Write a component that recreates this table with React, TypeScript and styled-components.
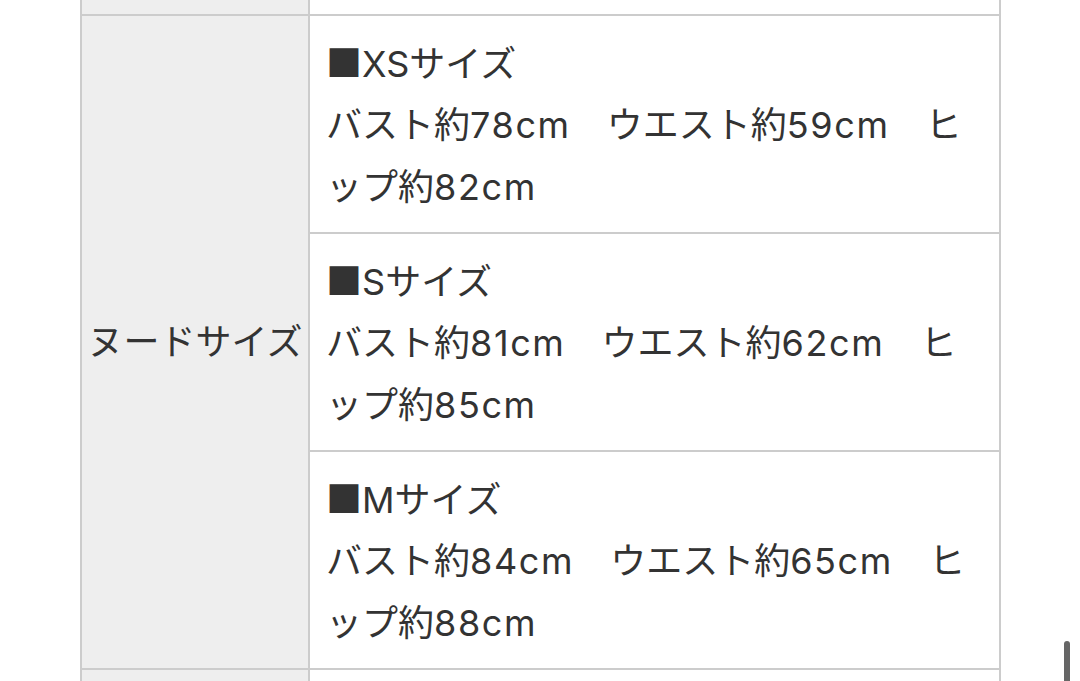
import styled, {createGlobalStyle} from 'styled-components'

type SizeSpec = {
  label: string
  bust: number
  waist: number
  hip: number
}

const sizes: SizeSpec[] = [
  {label: 'XS', bust: 78, waist: 59, hip: 82},
  {label: 'S', bust: 81, waist: 62, hip: 85},
  {label: 'M', bust: 84, waist: 65, hip: 88},
]

const GlobalStyle = createGlobalStyle`
  html, body {
    margin: 0;
    padding: 0;
    background: #fff;
    overflow: hidden;
  }
  body {
    font-family: Inter, 'Noto Sans CJK JP', sans-serif;
    color: #333;
  }
`

const Page = styled.div`
  height: 681px;
  overflow: hidden;
  padding-left: 80px;
`

const SpecGrid = styled.div`
  display: grid;
  grid-template-columns: 226px 689px;
  grid-template-rows: 14px repeat(3, 216px) 60px;
  gap: 2px;
  padding: 0 2px;
  width: fit-content;
  background: #ccc;
`

const HeadCell = styled.div<{$rows?: number}>`
  grid-column: 1;
  grid-row: ${(p) => (p.$rows ? `span ${p.$rows}` : 'auto')};
  display: flex;
  align-items: center;
  justify-content: center;
  padding-bottom: 6px;
  background: #eee;
  font-size: 36px;
  white-space: nowrap;
`

const DataCell = styled.div<{$empty?: boolean}>`
  grid-column: 2;
  background: #fff;
  padding: ${(p) => (p.$empty ? '0' : '12px 16px 0 16px')};
  font-size: 36px;
  line-height: 61.5px;
  line-break: normal;
  overflow: hidden;
`

const TitleLine = styled.div`
  height: 67px;
  line-height: 67px;
`

const Mark = styled.span`
  font-family: 'Noto Sans CJK JP', sans-serif;
`

const Measure = styled.span`
  letter-spacing: 0.045em;
`

const ScrollThumb = styled.div`
  position: fixed;
  right: 10px;
  bottom: -10px;
  width: 6px;
  height: 50px;
  border-radius: 3px;
  background: #666;
`

export default function App() {
  return (
    <>
      <GlobalStyle />
      <Page lang="ja">
        <SpecGrid>
          <HeadCell />
          <DataCell $empty />
          <HeadCell $rows={sizes.length}>ヌードサイズ</HeadCell>
          {sizes.map((s) => (
            <DataCell key={s.label}>
              <TitleLine>
                <Mark>■</Mark>
                {s.label}サイズ
              </TitleLine>
              <div>
                バスト約<Measure>{s.bust}cm</Measure>　ウエスト約<Measure>{s.waist}cm</Measure>　ヒップ約
                <Measure>{s.hip}cm</Measure>
              </div>
            </DataCell>
          ))}
          <HeadCell />
          <DataCell $empty />
        </SpecGrid>
      </Page>
      <ScrollThumb />
    </>
  )
}
